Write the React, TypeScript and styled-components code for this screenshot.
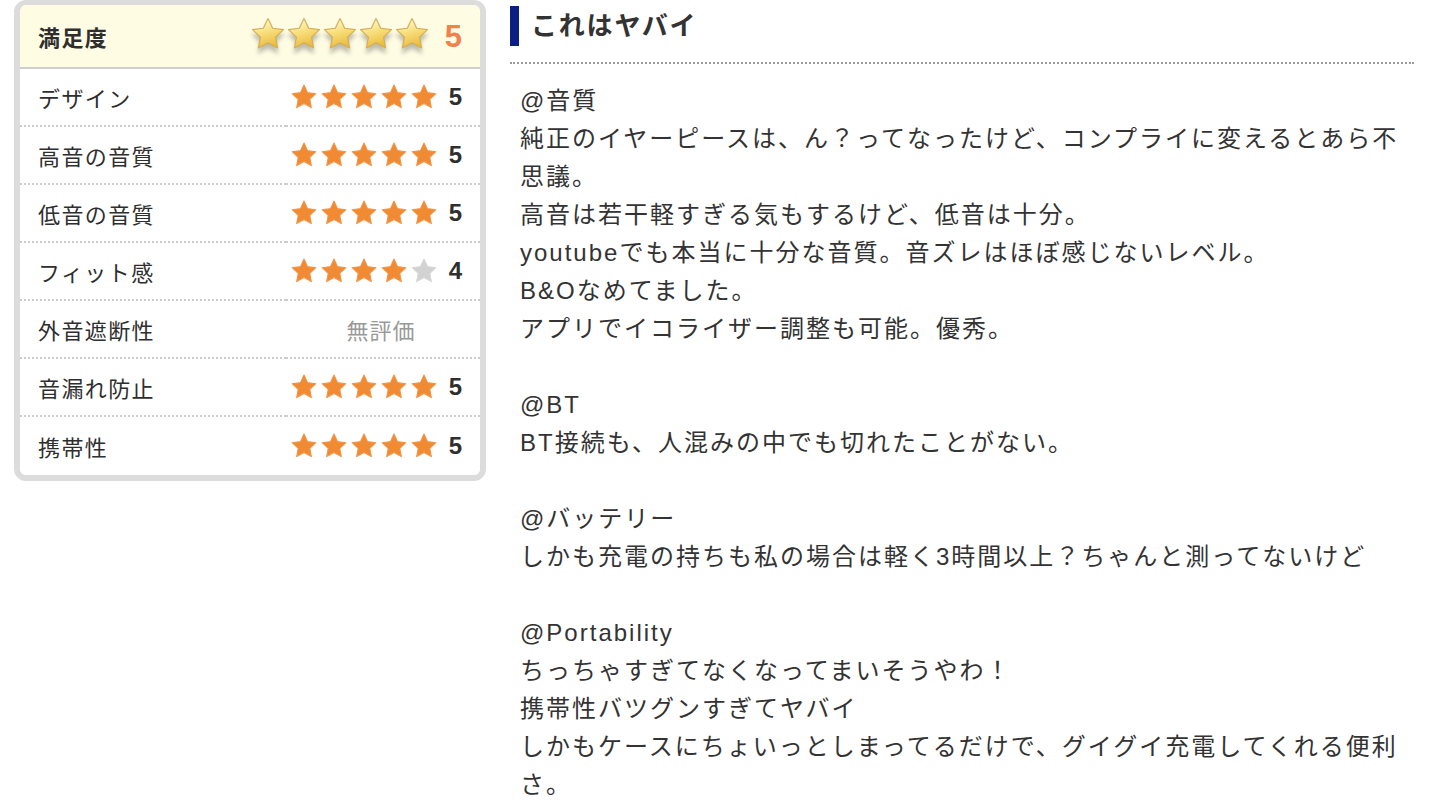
import React from "react";
import styled, { createGlobalStyle } from "styled-components";

const GlobalStyle = createGlobalStyle`
  html, body { margin: 0; padding: 0; background: #fff; }
  body {
    font-family: "Liberation Sans", "Noto Sans CJK JP", sans-serif;
    color: #333;
  }
`;

const Page = styled.div`
  display: flex;
  align-items: flex-start;
  gap: 24px;
  padding-left: 14px;
  width: 1432px;
  height: 808px;
  overflow: hidden;
  box-sizing: border-box;
`;

const Panel = styled.div`
  width: 472px;
  box-sizing: border-box;
  border: 6px solid #dcdcdc;
  border-top-width: 5px;
  border-radius: 12px;
  background: #fff;
  overflow: hidden;
  flex-shrink: 0;
`;

const Row = styled.div<{ $head?: boolean }>`
  display: flex;
  height: ${(p) => (p.$head ? "62px" : "58px")};
  background: ${(p) => (p.$head ? "#fffce4" : "#fff")};
  border-bottom: ${(p) => (p.$head ? "2px solid #cfcfcf" : "none")};
`;

const LabelCell = styled.div<{ $head?: boolean; $last?: boolean }>`
  width: 266px;
  box-sizing: border-box;
  padding-left: 18px;
  display: flex;
  align-items: center;
  font-size: 22px;
  letter-spacing: 1.4px;
  font-weight: ${(p) => (p.$head ? 700 : 400)};
  color: #2e2e2e;
  border-bottom: ${(p) => (p.$head || p.$last ? "none" : "2px dotted #cdcdcd")};
`;

const ValueCell = styled.div<{ $last?: boolean; $head?: boolean }>`
  flex: 1;
  display: flex;
  align-items: center;
  justify-content: flex-end;
  padding-right: 18px;
  gap: ${(p) => (p.$head ? "16px" : "12px")};
  border-bottom: ${(p) => (p.$head || p.$last ? "none" : "2px dotted #cdcdcd")};
`;

const Unrated = styled.div`
  flex: 1;
  text-align: center;
  font-size: 22px;
  color: #999;
  padding-left: 14px;
  letter-spacing: 1px;
`;

const Stars = styled.div<{ $head?: boolean }>`
  display: flex;
  gap: ${(p) => (p.$head ? "2px" : "4px")};
  align-items: center;
`;

const Score = styled.span<{ $head?: boolean }>`
  font-weight: 700;
  font-size: ${(p) => (p.$head ? "31px" : "24px")};
  color: ${(p) => (p.$head ? "#f0824e" : "#2f2f2f")};
  line-height: 1;
`;

const StarSvg = styled.svg`
  display: block;
`;

const GoldSvg = styled.svg`
  display: block;
  filter: drop-shadow(0 5px 2px rgba(90, 90, 90, 0.4));
  margin-top: -4px;
`;

const STAR =
  "12,1 15.29,7.97 22.94,8.95 17.33,14.23 18.76,21.8 12,18.1 5.24,21.8 6.67,14.23 1.06,8.95 8.71,7.97";

const Star = ({ on }: { on: boolean }) => (
  <StarSvg width="26" height="26" viewBox="0 0 24 24">
    <polygon
      points={STAR}
      fill={on ? "#f08a33" : "#d2d2d2"}
      stroke={on ? "#f39445" : "#d6d6d6"}
      strokeWidth="1"
      strokeLinejoin="round"
    />
  </StarSvg>
);

const GoldStar = ({ id }: { id: string }) => (
  <GoldSvg width="34" height="34" viewBox="0 0 24 24">
    <defs>
      <linearGradient id={id} x1="0.3" y1="0" x2="0.6" y2="1">
        <stop offset="0" stopColor="#fffbe0" />
        <stop offset="0.45" stopColor="#f8df7c" />
        <stop offset="1" stopColor="#e9b83a" />
      </linearGradient>
    </defs>
    <polygon
      points={STAR}
      fill={`url(#${id})`}
      stroke="#d4ae52"
      strokeWidth="0.8"
      strokeLinejoin="round"
    />
  </GoldSvg>
);

const Right = styled.div`
  width: 904px;
  flex-shrink: 0;
`;

const HeadingWrap = styled.div`
  padding-top: 6px;
  padding-bottom: 16px;
  border-bottom: 2px dotted #9a9a9a;
`;

const Heading = styled.h2`
  margin: 0;
  height: 40px;
  line-height: 40px;
  border-left: 9px solid #0b1f82;
  padding-left: 12px;
  font-size: 26px;
  font-weight: 700;
  letter-spacing: 1.8px;
  color: #333;
`;

const Body = styled.div`
  margin-top: 18px;
  padding-left: 10px;
  font-size: 24px;
  letter-spacing: 2px;
  line-height: 38px;
  color: #333;
`;

const Para = styled.p`
  margin: 0 0 38px 0;
`;

type Item = { label: string; score: number | null };

const items: Item[] = [
  { label: "デザイン", score: 5 },
  { label: "高音の音質", score: 5 },
  { label: "低音の音質", score: 5 },
  { label: "フィット感", score: 4 },
  { label: "外音遮断性", score: null },
  { label: "音漏れ防止", score: 5 },
  { label: "携帯性", score: 5 },
];

const paragraphs: string[][] = [
  [
    "@音質",
    "純正のイヤーピースは、ん？ってなったけど、コンプライに変えるとあら不思議。",
    "高音は若干軽すぎる気もするけど、低音は十分。",
    "youtubeでも本当に十分な音質。音ズレはほぼ感じないレベル。",
    "B&Oなめてました。",
    "アプリでイコライザー調整も可能。優秀。",
  ],
  ["@BT", "BT接続も、人混みの中でも切れたことがない。"],
  ["@バッテリー", "しかも充電の持ちも私の場合は軽く3時間以上？ちゃんと測ってないけど"],
  [
    "@Portability",
    "ちっちゃすぎてなくなってまいそうやわ！",
    "携帯性バツグンすぎてヤバイ",
    "しかもケースにちょいっとしまってるだけで、グイグイ充電してくれる便利さ。",
  ],
];

export default function App() {
  return (
    <>
      <GlobalStyle />
      <Page>
        <Panel>
          <Row $head>
            <LabelCell $head>満足度</LabelCell>
            <ValueCell $head>
              <Stars $head>
                {[0, 1, 2, 3, 4].map((i) => (
                  <GoldStar key={i} id={`g${i}`} />
                ))}
              </Stars>
              <Score $head>5</Score>
            </ValueCell>
          </Row>
          {items.map((it, idx) => {
            const last = idx === items.length - 1;
            return (
              <Row key={it.label}>
                <LabelCell $last={last}>{it.label}</LabelCell>
                <ValueCell $last={last}>
                  {it.score === null ? (
                    <Unrated>無評価</Unrated>
                  ) : (
                    <>
                      <Stars>
                        {[0, 1, 2, 3, 4].map((i) => (
                          <Star key={i} on={i < (it.score as number)} />
                        ))}
                      </Stars>
                      <Score>{it.score}</Score>
                    </>
                  )}
                </ValueCell>
              </Row>
            );
          })}
        </Panel>
        <Right>
          <HeadingWrap>
            <Heading>これはヤバイ</Heading>
          </HeadingWrap>
          <Body>
            {paragraphs.map((lines, i) => (
              <Para key={i}>
                {lines.map((l, j) => (
                  <React.Fragment key={j}>
                    {j > 0 && <br />}
                    {l}
                  </React.Fragment>
                ))}
              </Para>
            ))}
          </Body>
        </Right>
      </Page>
    </>
  );
}
